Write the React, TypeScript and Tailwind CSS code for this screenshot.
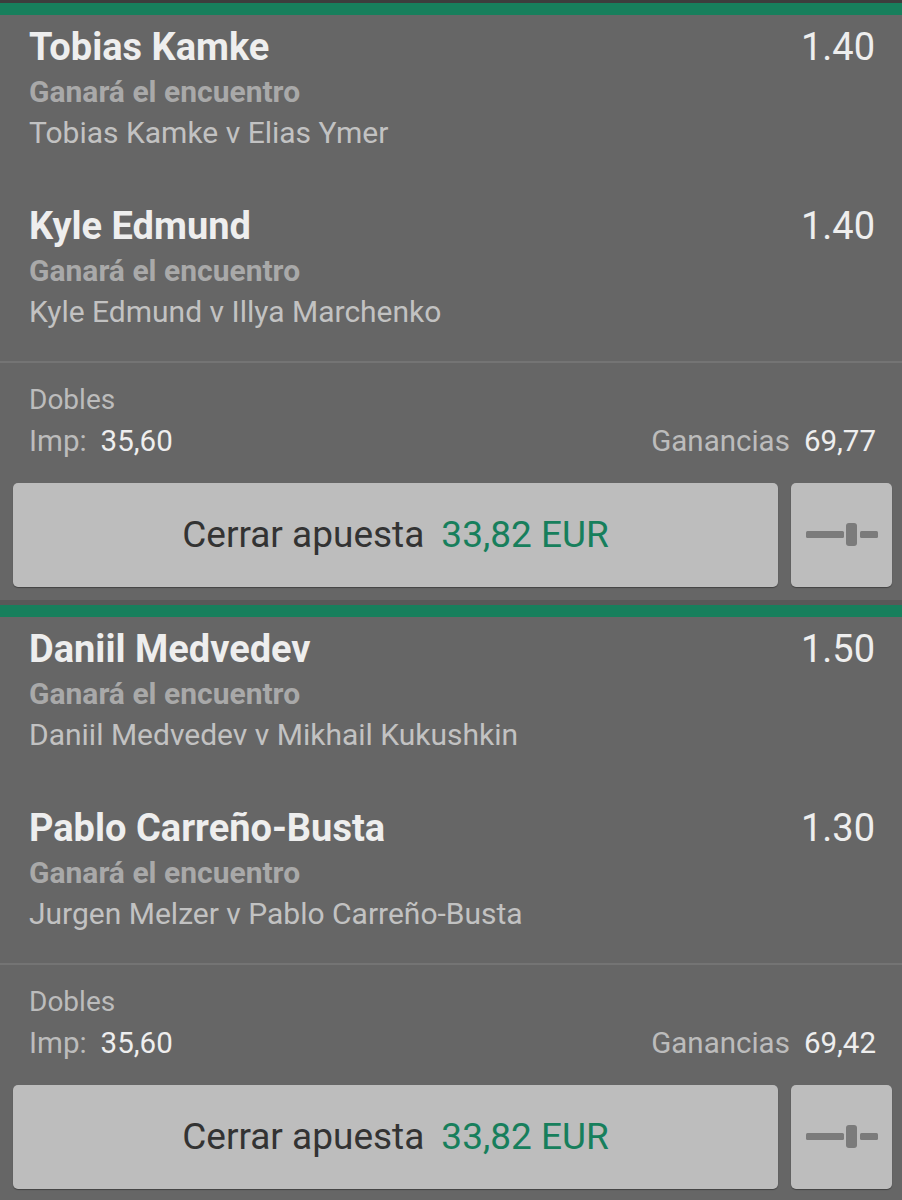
import React from 'react';

type Pick = {
    name: string;
    odds: string;
    match: string;
};

type Bet = {
    picks: Pick[];
    stake: string;
    winnings: string;
    cashout: string;
};

const bets: Bet[] = [
    {
        picks: [
            { name: 'Tobias Kamke', odds: '1.40', match: 'Tobias Kamke v Elias Ymer' },
            { name: 'Kyle Edmund', odds: '1.40', match: 'Kyle Edmund v Illya Marchenko' },
        ],
        stake: '35,60',
        winnings: '69,77',
        cashout: '33,82 EUR',
    },
    {
        picks: [
            { name: 'Daniil Medvedev', odds: '1.50', match: 'Daniil Medvedev v Mikhail Kukushkin' },
            { name: 'Pablo Carreño-Busta', odds: '1.30', match: 'Jurgen Melzer v Pablo Carreño-Busta' },
        ],
        stake: '35,60',
        winnings: '69,42',
        cashout: '33,82 EUR',
    },
];

const SliderIcon: React.FC = () => (
    <svg width="72" height="24" viewBox="0 0 72 24" className="block">
        <rect x="0" y="8" width="38" height="7" rx="1.5" fill="#7b7b7b" />
        <rect x="40" y="0" width="11" height="23" rx="3" fill="#7b7b7b" />
        <rect x="54" y="8" width="18" height="7" rx="1.5" fill="#7b7b7b" />
    </svg>
);

const PickRow: React.FC<{ pick: Pick }> = ({ pick }) => (
    <div className="pl-[29px] pr-[27px]">
        <div className="flex items-center justify-between h-[44px]">
            <span className="text-[38px] font-bold text-[#eeeeee] leading-none">{pick.name}</span>
            <span className="text-[38px] text-[#eeeeee] leading-none">{pick.odds}</span>
        </div>
        <div className="flex items-center h-[45px] text-[30px] font-bold text-[#a9a9a9]">Ganará el encuentro</div>
        <div className="flex items-center h-[36px] text-[30px] text-[#c2c2c2]">{pick.match}</div>
    </div>
);

const BetCard: React.FC<{ bet: Bet; first: boolean }> = ({ bet, first }) => (
    <div>
        <div className={first ? 'h-[3px] bg-[#3d3d3d]' : 'h-[5px] bg-[#585858]'} />
        <div className="h-[12px] bg-[#177f5c]" />
        <div className="pt-[10px] flex flex-col gap-[54px]">
            {bet.picks.map((p) => (
                <PickRow key={p.name} pick={p} />
            ))}
        </div>
        <div className="mt-[32px] h-[2px] bg-[#747474]" />
        <div className="pt-[18px] pl-[29px] pr-[26px]">
            <div className="flex items-center h-[38px] text-[28px] text-[#bcbcbc]">Dobles</div>
            <div className="flex items-center justify-between h-[45px] text-[29.5px]">
                <div>
                    <span className="text-[#bcbcbc]">Imp:</span>
                    <span className="ml-[14px] text-[#eeeeee]">{bet.stake}</span>
                </div>
                <div>
                    <span className="text-[#bcbcbc]">Ganancias</span>
                    <span className="ml-[14px] text-[#eeeeee]">{bet.winnings}</span>
                </div>
            </div>
        </div>
        <div className="mt-[19px] pl-[13px] pr-[10px] flex gap-[13px] pb-[13px]">
            <div className="flex-1 h-[104px] rounded-[5px] bg-[#bdbdbd] shadow-[0_1px_1px_rgba(0,0,0,0.35)] flex items-center justify-center text-[37px]">
                <span className="text-[#333333]">Cerrar apuesta</span>
                <span className="ml-[17px] text-[#177f5c]">{bet.cashout}</span>
            </div>
            <div className="w-[101px] h-[104px] rounded-[5px] bg-[#bdbdbd] shadow-[0_1px_1px_rgba(0,0,0,0.35)] flex items-center justify-center">
                <SliderIcon />
            </div>
        </div>
    </div>
);

export default function App() {
    return (
        <div className="w-[902px] h-[1200px] overflow-hidden bg-[#666666] font-['Roboto',sans-serif]">
            {bets.map((b, i) => (
                <BetCard key={i} bet={b} first={i === 0} />
            ))}
        </div>
    );
}
